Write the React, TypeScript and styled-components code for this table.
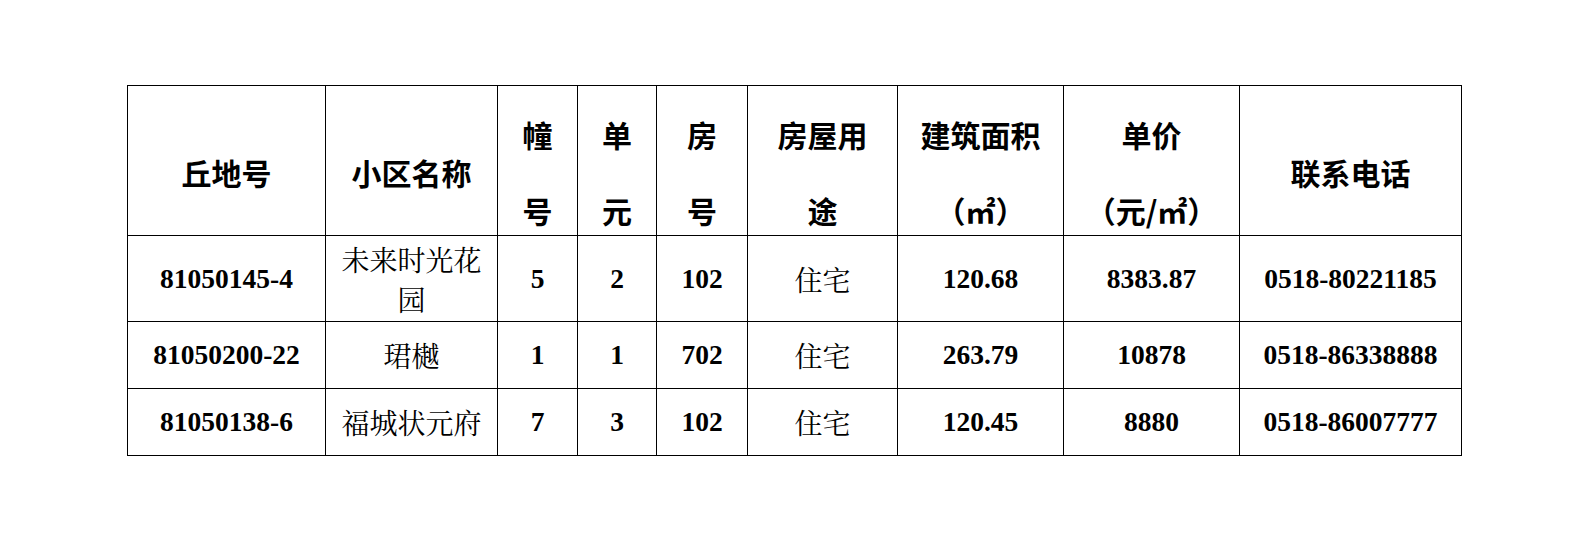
import React from 'react';
import styled, { createGlobalStyle } from 'styled-components';

const GlobalStyle = createGlobalStyle`
  html, body {
    margin: 0;
    padding: 0;
    background: #fff;
  }
`;

const Page = styled.div`
  padding: 85px 0 0 127px;
  width: 1587px;
  height: 541px;
  box-sizing: border-box;
  background: #fff;
`;

const Table = styled.table`
  border-collapse: collapse;
  table-layout: fixed;
  width: 1334px;
  color: #000;
`;

const HeadRow = styled.tr`
  height: 150px;
`;

const BodyRow = styled.tr<{ $h: number }>`
  height: ${(p) => p.$h}px;
`;

const Th = styled.th`
  border: 1px solid #000;
  padding: 22px 0 0;
  vertical-align: middle;
  text-align: center;
  font-family: 'Noto Sans CJK SC', 'Liberation Sans', sans-serif;
  font-weight: 700;
  font-size: 30px;
`;

const HeadLine = styled.span`
  display: block;
  line-height: 36px;
  & + & {
    margin-top: 40px;
  }
`;

const Td = styled.td<{ $kind: 'num' | 'text' }>`
  border: 1px solid #000;
  padding: 0 4px;
  vertical-align: middle;
  text-align: center;
  font-family: ${(p) =>
    p.$kind === 'num'
      ? "'Liberation Serif', 'Times New Roman', serif"
      : "'Noto Serif CJK SC', 'Noto Sans CJK SC', serif"};
  font-weight: ${(p) => (p.$kind === 'num' ? 700 : 400)};
  font-size: ${(p) => (p.$kind === 'num' ? 27.5 : 28)}px;
  line-height: ${(p) => (p.$kind === 'num' ? 30 : 40)}px;
`;

const columns = [198, 172, 80, 79, 91, 150, 166, 176, 222];

const headers: string[][] = [
  ['丘地号'],
  ['小区名称'],
  ['幢', '号'],
  ['单', '元'],
  ['房', '号'],
  ['房屋用', '途'],
  ['建筑面积', '（㎡）'],
  ['单价', '（元/㎡）'],
  ['联系电话'],
];

const rows = [
  { h: 86, cells: ['81050145-4', '未来时光花园', '5', '2', '102', '住宅', '120.68', '8383.87', '0518-80221185'] },
  { h: 67, cells: ['81050200-22', '珺樾', '1', '1', '702', '住宅', '263.79', '10878', '0518-86338888'] },
  { h: 67, cells: ['81050138-6', '福城状元府', '7', '3', '102', '住宅', '120.45', '8880', '0518-86007777'] },
];

// columns whose body text is Chinese rather than figures
const textCols = [1, 5];

const App: React.FC = () => {
  return (
    <>
      <GlobalStyle />
      <Page>
        <Table>
          <colgroup>
            {columns.map((w, i) => (
              <col key={i} style={{ width: w }} />
            ))}
          </colgroup>
          <thead>
            <HeadRow>
              {headers.map((lines, i) => (
                <Th key={i}>
                  {lines.map((line) => (
                    <HeadLine key={line}>{line}</HeadLine>
                  ))}
                </Th>
              ))}
            </HeadRow>
          </thead>
          <tbody>
            {rows.map((row) => (
              <BodyRow key={row.cells[0]} $h={row.h}>
                {row.cells.map((cell, i) => (
                  <Td key={i} $kind={textCols.includes(i) ? 'text' : 'num'}>
                    {cell}
                  </Td>
                ))}
              </BodyRow>
            ))}
          </tbody>
        </Table>
      </Page>
    </>
  );
};

export default App;
